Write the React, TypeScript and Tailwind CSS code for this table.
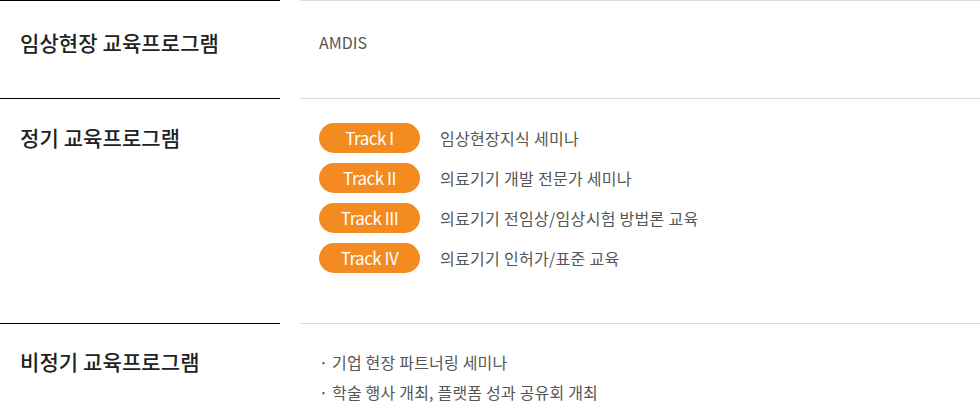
const tracks = [
  { name: "Track I", desc: "임상현장지식 세미나" },
  { name: "Track II", desc: "의료기기 개발 전문가 세미나" },
  { name: "Track III", desc: "의료기기 전임상/임상시험 방법론 교육" },
  { name: "Track IV", desc: "의료기기 인허가/표준 교육" },
];

const font = { fontFamily: '"Noto Sans CJK KR", "Noto Sans", sans-serif' };

function Row({ title, children, className }: { title: string; children: React.ReactNode; className: string }) {
  return (
    <div className="flex gap-5">
      <div className={`w-[280px] shrink-0 border-t border-black px-5 ${className}`}>
        <h3 className="text-[21px] font-medium leading-7 tracking-[0.1px] text-[#222]">{title}</h3>
      </div>
      <div className={`flex-1 border-t border-[#dcdcdc] pl-[19px] ${className}`}>{children}</div>
    </div>
  );
}

export default function App() {
  return (
    <main className="h-[403px] w-[980px] overflow-hidden bg-white" style={font}>
      <Row title="임상현장 교육프로그램" className="h-[98px] pt-[27px]">
        <p className="text-[16px] leading-7 text-[#555]">AMDIS</p>
      </Row>

      <Row title="정기 교육프로그램" className="h-[225px] pt-[24px]">
        <ul className="flex flex-col gap-[10px]">
          {tracks.map((t) => (
            <li key={t.name} className="flex items-center gap-5">
              <span className="flex h-[30px] w-[101px] items-center justify-center rounded-full bg-[#f38b20] text-[17px] tracking-[-0.5px] text-white">
                {t.name}
              </span>
              <span className="text-[16px] tracking-[0.3px] text-[#555]">{t.desc}</span>
            </li>
          ))}
        </ul>
      </Row>

      <Row title="비정기 교육프로그램" className="h-[80px] pt-[23px]">
        <ul className="text-[16px] leading-[30px] tracking-[0.2px] text-[#555]">
          <li>· 기업 현장 파트너링 세미나</li>
          <li>· 학술 행사 개최, 플랫폼 성과 공유회 개최</li>
        </ul>
      </Row>
    </main>
  );
}
